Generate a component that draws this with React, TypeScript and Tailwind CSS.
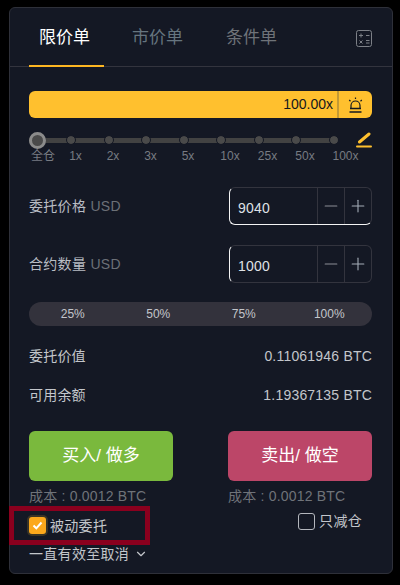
import { ChevronDown, Minus, Plus } from 'lucide-react';

const FONT = "font-['Liberation_Sans','Noto_Sans_CJK_SC',sans-serif]";

const marks = ['全仓', '1x', '2x', '3x', '5x', '10x', '25x', '50x', '100x'];
const markWidths = ['w-[28px]', 'w-[37px]', 'w-[38px]', 'w-[37px]', 'w-[38px]', 'w-[46px]', 'w-[29px]', 'w-[46px]', 'w-[35px]'];

const Stepper = ({ value, focused }: { value: string; focused?: boolean }) => (
  <div
    className={`flex h-[38px] w-[143px] rounded-md border border-[#33343e] border-l-[#f4f4f4] text-[#dfe1e6] ${
      focused ? 'border-b-[#f4f4f4]' : ''
    }`}
  >
    <div className="flex flex-1 items-center pl-[8px] pt-[5px] text-[14px] tracking-[0.2px]">{value}</div>
    <div className="flex w-[27px] items-center justify-center border-l border-[#33343e] text-[#8b8e96]">
      <Minus size={20} strokeWidth={1.3} />
    </div>
    <div className="flex w-[27px] items-center justify-center border-l border-[#33343e] text-[#a5adb8]">
      <Plus size={20} strokeWidth={1.3} />
    </div>
  </div>
);

export default function App() {
  return (
    <div className={`h-[585px] w-[400px] overflow-hidden bg-black pl-[9px] pt-[7px] ${FONT}`}>
      <div className="h-[567px] w-[384px] rounded-md border border-[#2e3039] bg-[#141824]">
        {/* Tabs */}
        <div className="flex h-[59px] items-stretch border-b border-[#33343e] pl-[19px] pr-[20px]">
          <div className="-mb-px flex w-[75px] items-center justify-center border-b-2 border-[#fdb622] pr-[4px] pt-[2px] text-[17px] text-white">
            限价单
          </div>
          <div className="ml-[28px] flex items-center pt-[2px] text-[17px] text-[#66757f]">市价单</div>
          <div className="ml-[43px] flex items-center pt-[2px] text-[17px] text-[#6f7379]">条件单</div>
          <div className="ml-auto flex items-center pt-[2px]">
            <svg width="16" height="17" viewBox="0 0 16 17" fill="none" stroke="#7d8087">
              <rect x="0.5" y="0.5" width="15" height="16" rx="2" />
              <path d="M3 5.5h4M5 3.5v4M10 5.5h3.5M3.5 10.5l3 3M6.5 10.5l-3 3M10 10.5h3.5M10 13h3.5" />
            </svg>
          </div>
        </div>

        <div className="pl-[19px] pr-[20px]">
          {/* Leverage */}
          <div className="mt-[24px] flex h-[27px] rounded-md bg-[#ffc02e] text-[#14181f]">
            <div className="flex flex-1 items-center justify-end pr-[4px] text-[14px]">100.00x</div>
            <div className="flex w-[35px] items-center justify-center border-l-2 border-[#c39a34]">
              <svg width="15" height="16" viewBox="0 0 15 16" fill="none" stroke="#14181f" strokeWidth="1.2">
                <path d="M3 11.5V8.5a4.5 4.5 0 0 1 9 0v3" />
                <path d="M2 11.5h11M1.5 15h12" strokeWidth="1.4" />
                <path d="M7.5 0.5v1.6M1.2 3l1.3 1.2M13.8 3l-1.3 1.2" />
              </svg>
            </div>
          </div>

          {/* Slider */}
          <div className="mt-[13px] flex h-[18px] items-center">
            <div className="relative flex items-center">
              <div className="absolute left-0 right-0 h-[5px] bg-[#424242]" />
              <div className="relative mr-[21px] h-[17px] w-[17px] rounded-full border-[3px] border-[#8b8b8b] bg-[#4a4a4a]" />
              {marks.slice(1).map((m, i) => (
                <div
                  key={m}
                  className={`relative h-[8px] w-[8px] rounded-full bg-[#4a4a4a] outline outline-1 outline-[#141824] ${
                    i > 0 ? 'ml-[29.5px]' : ''
                  }`}
                />
              ))}
            </div>
            <div className="ml-auto">
              <svg width="16" height="16" viewBox="0 0 16 16" fill="none" stroke="#ffc02e" strokeLinecap="round">
                <path d="M3.5 10L13 2" strokeWidth="3" />
                <path d="M1 14.5h14" strokeWidth="2" />
              </svg>
            </div>
          </div>
          <div className="flex text-[12px] leading-[14px] text-[#777b82]">
            {marks.map((m, i) => (
              <span key={m} className={`${markWidths[i]} shrink-0 whitespace-nowrap text-center`}>
                {m}
              </span>
            ))}
          </div>

          {/* Order inputs */}
          <div className="mt-[24px] flex items-center justify-between">
            <span className="text-[14px] tracking-[0.3px] text-[#b9bdc4]">
              委托价格 <span className="text-[#6c7077]">USD</span>
            </span>
            <Stepper value="9040" focused />
          </div>
          <div className="mt-[20px] flex items-center justify-between">
            <span className="text-[14px] tracking-[0.3px] text-[#b9bdc4]">
              合约数量 <span className="text-[#6c7077]">USD</span>
            </span>
            <Stepper value="1000" />
          </div>

          {/* Percent shortcuts */}
          <div className="mt-[19px] grid h-[24px] grid-cols-4 items-center rounded-full bg-[#33323c] pl-[1px] text-center text-[12px] text-[#c3c6cb]">
            <span>25%</span>
            <span>50%</span>
            <span>75%</span>
            <span>100%</span>
          </div>

          {/* Summary */}
          <div className="mt-[21px] flex h-[18px] items-center justify-between text-[14px] tracking-[0.2px] text-[#c3c6cb]">
            <span>委托价值</span>
            <span>0.11061946 BTC</span>
          </div>
          <div className="mt-[21px] flex h-[18px] items-center justify-between text-[14px] tracking-[0.2px] text-[#c3c6cb]">
            <span>可用余额</span>
            <span>1.19367135 BTC</span>
          </div>

          {/* Buy / sell */}
          <div className="mt-[27px] flex justify-between">
            <div className="w-[144px]">
              <div className="flex h-[50px] items-center justify-center rounded-md bg-[#7ab93d] text-[17px] text-white">
                买入/ 做多
              </div>
              <div className="mt-[7px] text-[14px] leading-[16px] tracking-[0.2px] text-[#6f7379]">成本 : 0.0012 BTC</div>
            </div>
            <div className="w-[144px]">
              <div className="flex h-[50px] items-center justify-center rounded-md bg-[#bc4668] text-[17px] text-white">
                卖出/ 做空
              </div>
              <div className="mt-[7px] text-[14px] leading-[16px] tracking-[0.2px] text-[#6f7379]">成本 : 0.0012 BTC</div>
            </div>
          </div>

          {/* Options */}
          <div className="flex items-start justify-between">
            <div className="-ml-[20px] mt-[2px] flex h-[39px] w-[141px] items-center border-[5px] border-[#8a001e] pl-[15px]">
              <div className="flex h-[17px] w-[17px] items-center justify-center rounded-[3px] bg-[#fca81c] ring-2 ring-[#3a3426]">
                <svg width="11" height="9" viewBox="0 0 11 9" fill="none" stroke="white" strokeWidth="2">
                  <path d="M1.5 4.5l2.8 2.8L9.5 1.5" />
                </svg>
              </div>
              <span className="ml-[4px] whitespace-nowrap pt-[1px] text-[14px] tracking-[0.3px] text-[#c3c6cb]">被动委托</span>
            </div>
            <div className="mr-[10px] mt-[7px] flex items-center">
              <div className="h-[17px] w-[17px] rounded-[3px] border border-[#b4b7bd]" />
              <span className="ml-[4px] text-[14px] tracking-[0.3px] text-[#c3c6cb]">只减仓</span>
            </div>
          </div>
          <div className="flex h-[18px] items-center text-[14px] tracking-[0.3px] text-[#c3c6cb]">
            <span>一直有效至取消</span>
            <ChevronDown size={14} strokeWidth={2} className="ml-[5px]" />
          </div>
        </div>
      </div>
    </div>
  );
}
